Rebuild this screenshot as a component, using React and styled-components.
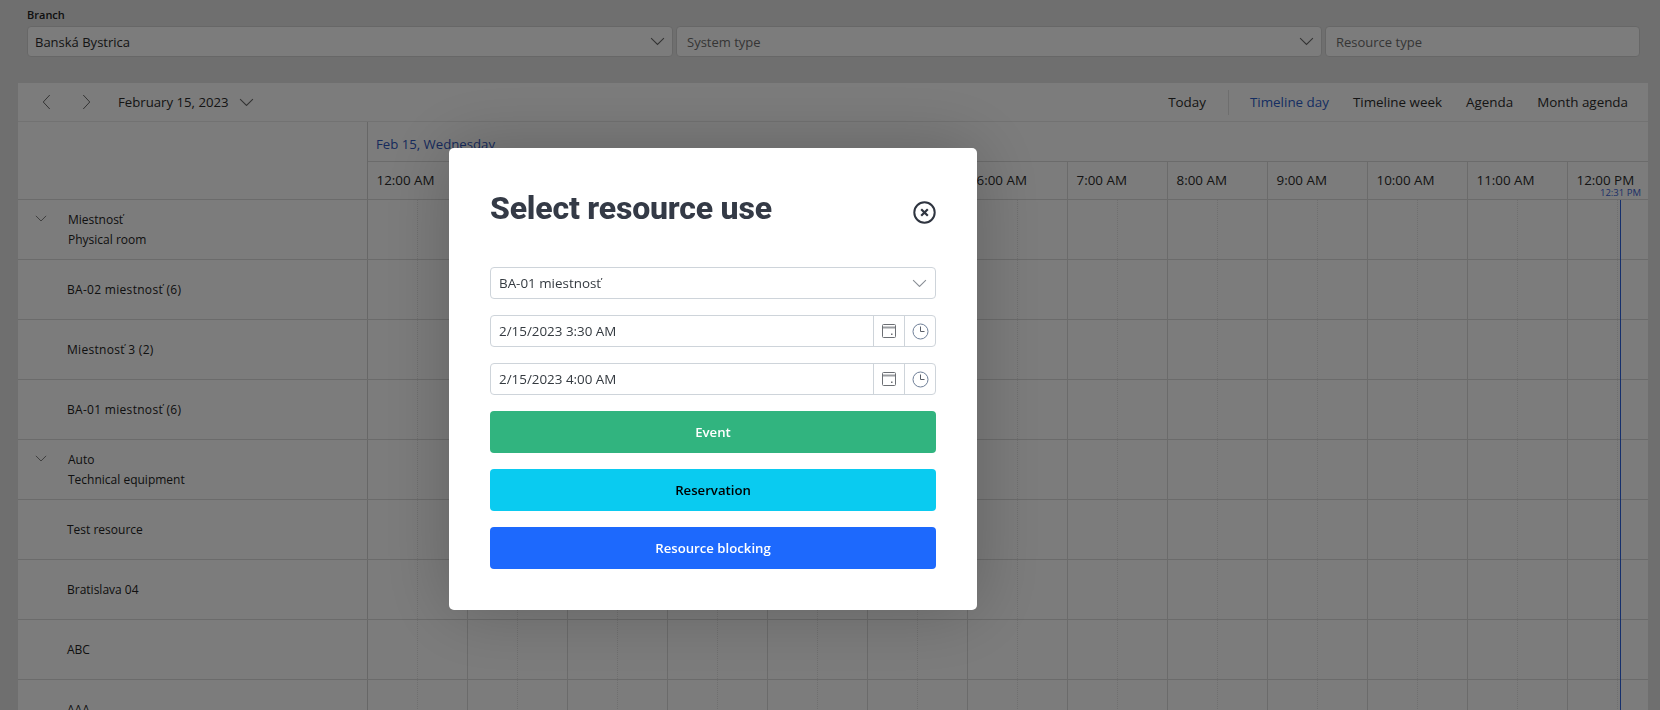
import React from "react";
import styled, { createGlobalStyle } from "styled-components";

const GlobalStyle = createGlobalStyle`
  html, body {
    margin: 0;
    height: 100%;
    overflow: hidden;
    background: #dedede;
    font-family: "Open Sans", "Liberation Sans", sans-serif;
  }
  * { box-sizing: border-box; }
`;

const Page = styled.div`
  height: 710px;
  overflow: hidden;
`;

const Filters = styled.div`
  padding: 7px 20px 0 27px;
  height: 83px;
`;

const FilterLabel = styled.div`
  font-size: 11px;
  font-weight: 600;
  line-height: 15px;
  height: 19px;
  color: #222;
`;

const FilterRow = styled.div`
  display: flex;
  gap: 3px;
`;

const FilterBox = styled.div`
  width: ${(p) => p.$width}px;
  height: 31px;
  display: flex;
  align-items: center;
  justify-content: space-between;
  padding: 0 7px 0 ${(p) => (p.$placeholder ? 10 : 7)}px;
  background: #f9f9f9;
  border: 1px solid #cfcfcf;
  border-radius: 4px;
  font-size: 13px;
  color: ${(p) => (p.$placeholder ? "#6b6b6b" : "#2a2a2a")};
`;

const Scheduler = styled.div`
  margin: 0 12px 0 18px;
  background: #f9f9f9;
`;

const Toolbar = styled.div`
  height: 39px;
  display: flex;
  align-items: center;
  padding: 0 8px 0 20px;
  border-bottom: 1px solid #e4e4e4;
  font-size: 13.4px;
  color: #2a2a2a;
`;

const NavButton = styled.span`
  width: 16px;
  margin-right: 24px;
  display: flex;
  justify-content: center;
`;

const CurrentDate = styled.span`
  margin-right: 10px;
  font-size: 13.2px;
`;

const ToolbarRight = styled.div`
  margin-left: auto;
  display: flex;
  align-items: center;
`;

const ViewLink = styled.span`
  padding: 0 12px;
  color: ${(p) => (p.$active ? "#2c5cc5" : "#2a2a2a")};
`;

const Divider = styled.span`
  width: 1px;
  height: 25px;
  margin: 0 9px 0 10px;
  background: #dcdcdc;
`;

const GridHead = styled.div`
  display: flex;
  height: 78px;
`;

const Corner = styled.div`
  width: 350px;
  flex: none;
  border-right: 1px solid #cfcfcf;
  border-bottom: 1px solid #d6d6d6;
`;

const HeadRight = styled.div`
  flex: 1;
  min-width: 0;
  overflow: hidden;
  display: flex;
  flex-direction: column;
`;

const DateCell = styled.div`
  height: 40px;
  padding: 13px 0 0 8px;
  font-size: 13.2px;
  line-height: 18px;
  color: #2f55b8;
  border-bottom: 1px solid #d6d6d6;
`;

const HourRow = styled.div`
  display: flex;
  height: 38px;
  border-bottom: 1px solid #d6d6d6;
`;

const HourCell = styled.div`
  width: 100px;
  flex: none;
  padding: 9px 0 0 8.5px;
  font-size: 13.4px;
  line-height: 18px;
  color: #2a2a2a;
  border-right: 1px solid #d6d6d6;
`;

const GridBody = styled.div`
  position: relative;
`;

const Row = styled.div`
  display: flex;
  height: 60px;
  border-bottom: 1px solid #d6d6d6;
`;

const RowName = styled.div`
  width: 350px;
  flex: none;
  display: flex;
  align-items: center;
  padding-left: ${(p) => (p.$group ? 17 : 49)}px;
  border-right: 1px solid #cfcfcf;
  font-size: 12px;
  line-height: 20px;
  letter-spacing: ${(p) => (p.$spaced ? 0.3 : 0)}px;
  color: #222;
`;

const GroupToggle = styled.span`
  width: 16px;
  margin-right: 17px;
  align-self: flex-start;
  margin-top: 15px;
  line-height: 0;
`;

const GroupText = styled.div`
  display: flex;
  flex-direction: column;
`;

const Slots = styled.div`
  flex: 1;
  min-width: 0;
  overflow: hidden;
  display: flex;
`;

const Slot = styled.div`
  width: 50px;
  flex: none;
  border-right: 1px ${(p) => (p.$half ? "dotted" : "solid")} ${(p) => (p.$half ? "#dedede" : "#d6d6d6")};
`;

const NowLine = styled.div`
  position: absolute;
  top: 0;
  bottom: 0;
  left: 1602px;
  width: 1px;
  background: #2a5fd8;
`;

const NowLabel = styled.span`
  position: absolute;
  left: 1582px;
  top: -13px;
  font-size: 9.5px;
  line-height: 12px;
  color: #3a5ed0;
`;

const Overlay = styled.div`
  position: fixed;
  inset: 0;
  background: rgba(0, 0, 0, 0.5);
`;

const Modal = styled.div`
  position: absolute;
  left: 449px;
  top: 148px;
  width: 528px;
  height: 462px;
  padding: 41px 41px 0;
  background: #fff;
  border-radius: 5px;
  box-shadow: 0 0 70px rgba(0, 0, 0, 0.22);
`;

const ModalHead = styled.div`
  display: flex;
  align-items: flex-start;
  justify-content: space-between;
  height: 78px;
`;

const Title = styled.h2`
  margin: 2px 0 0;
  font-family: Roboto, "Liberation Sans", sans-serif;
  font-size: 32px;
  font-weight: 800;
  letter-spacing: -0.2px;
  line-height: 34px;
  color: #343a46;
`;

const CloseButton = styled.span`
  margin-top: 12px;
  line-height: 0;
`;

const Stack = styled.div`
  display: flex;
  flex-direction: column;
  gap: 16px;
`;

const Field = styled.div`
  height: 32px;
  display: flex;
  align-items: center;
  border: 1px solid #ced4da;
  border-radius: 4px;
  font-size: 13.4px;
  color: #343a40;
`;

const FieldText = styled.span`
  flex: 1;
  padding-left: 8px;
`;

const Addon = styled.span`
  width: 31px;
  height: 100%;
  flex: none;
  display: flex;
  align-items: center;
  justify-content: center;
  border-left: 1px solid #ced4da;
`;

const ArrowBox = styled.span`
  width: 31px;
  display: flex;
  justify-content: center;
`;

const ActionButton = styled.button`
  height: 42px;
  border: 0;
  border-radius: 4px;
  background: ${(p) => p.$bg};
  color: ${(p) => p.$fg};
  font-family: inherit;
  font-size: 13.2px;
  font-weight: 600;
`;

const Chevron = ({ dir = "down", size = 15, color = "#666" }) => {
  const paths = {
    down: "M1 1l6 6 6-6",
    left: "M7.5 1L1 8l6.5 7",
    right: "M1 1l6.5 7L1 15",
  };
  const isDown = dir === "down";
  return (
    <svg
      width={isDown ? size : 9}
      height={isDown ? size * 0.57 : 16}
      viewBox={isDown ? "0 0 14 8" : "0 0 8.5 16"}
      fill="none"
      stroke={color}
      strokeWidth="1"
    >
      <path d={paths[dir]} />
    </svg>
  );
};

const CalendarIcon = () => (
  <svg width="16" height="16" viewBox="0 0 16 16" fill="none">
    <rect x="1.5" y="1.5" width="13" height="13" rx="1" stroke="#6c6f74" />
    <path d="M2 4.5h12" stroke="#9a9da1" strokeWidth="2" />
    <path d="M4 1v1M12 1v1" stroke="#6c6f74" />
    <rect x="10" y="10.5" width="1.5" height="1.5" fill="#6c6f74" />
  </svg>
);

const ClockIcon = () => (
  <svg width="17" height="17" viewBox="0 0 17 17" fill="none" stroke="#6f7f98">
    <circle cx="8.5" cy="8.5" r="7.5" />
    <path d="M8.5 3.5v5h4" stroke="#5a5f68" />
  </svg>
);

const CloseIcon = () => (
  <svg width="23" height="23" viewBox="0 0 23 23" fill="none" stroke="#2f3540">
    <circle cx="11.5" cy="11.5" r="10.2" strokeWidth="2" />
    <path d="M8.2 8.2l6.6 6.6M14.8 8.2l-6.6 6.6" strokeWidth="2.2" />
  </svg>
);

const hours = [
  "12:00 AM", "1:00 AM", "2:00 AM", "3:00 AM", "4:00 AM", "5:00 AM", "6:00 AM",
  "7:00 AM", "8:00 AM", "9:00 AM", "10:00 AM", "11:00 AM", "12:00 PM",
];

const resources = [
  { name: "Miestnosť", sub: "Physical room" },
  { name: "BA-02 miestnosť (6)" },
  { name: "Miestnosť 3 (2)" },
  { name: "BA-01 miestnosť (6)" },
  { name: "Auto", sub: "Technical equipment" },
  { name: "Test resource" },
  { name: "Bratislava 04" },
  { name: "ABC" },
  { name: "AAA" },
];

const views = ["Timeline day", "Timeline week", "Agenda", "Month agenda"];

const DateField = ({ value }) => (
  <Field>
    <FieldText>{value}</FieldText>
    <Addon><CalendarIcon /></Addon>
    <Addon><ClockIcon /></Addon>
  </Field>
);

const App = () => {
  return (
    <Page>
      <GlobalStyle />
      <Filters>
        <FilterLabel>Branch</FilterLabel>
        <FilterRow>
          <FilterBox $width={646}>
            Banská Bystrica
            <Chevron />
          </FilterBox>
          <FilterBox $width={646} $placeholder>
            System type
            <Chevron />
          </FilterBox>
          <FilterBox $width={315} $placeholder>Resource type</FilterBox>
        </FilterRow>
      </Filters>

      <Scheduler>
        <Toolbar>
          <NavButton><Chevron dir="left" /></NavButton>
          <NavButton><Chevron dir="right" /></NavButton>
          <CurrentDate>February 15, 2023</CurrentDate>
          <Chevron size={15} />
          <ToolbarRight>
            <ViewLink>Today</ViewLink>
            <Divider />
            {views.map((v, i) => (
              <ViewLink key={v} $active={i === 0}>{v}</ViewLink>
            ))}
          </ToolbarRight>
        </Toolbar>

        <GridHead>
          <Corner />
          <HeadRight>
            <DateCell>Feb 15, Wednesday</DateCell>
            <HourRow>
              {hours.map((h) => (
                <HourCell key={h}>{h}</HourCell>
              ))}
            </HourRow>
          </HeadRight>
        </GridHead>

        <GridBody>
          {resources.map((r) => (
            <Row key={r.name}>
              <RowName $group={!!r.sub} $spaced={!r.sub && r.name.includes("ť")}>
                {r.sub ? (
                  <>
                    <GroupToggle><Chevron size={12} /></GroupToggle>
                    <GroupText>
                      <span>{r.name}</span>
                      <span>{r.sub}</span>
                    </GroupText>
                  </>
                ) : (
                  r.name
                )}
              </RowName>
              <Slots>
                {hours.map((h) => (
                  <React.Fragment key={h}>
                    <Slot $half />
                    <Slot />
                  </React.Fragment>
                ))}
              </Slots>
            </Row>
          ))}
          <NowLine />
          <NowLabel>12:31 PM</NowLabel>
        </GridBody>
      </Scheduler>

      <Overlay>
        <Modal>
          <ModalHead>
            <Title>Select resource use</Title>
            <CloseButton><CloseIcon /></CloseButton>
          </ModalHead>
          <Stack>
            <Field>
              <FieldText>BA-01 miestnosť</FieldText>
              <ArrowBox><Chevron color="#8a8f96" /></ArrowBox>
            </Field>
            <DateField value="2/15/2023 3:30 AM" />
            <DateField value="2/15/2023 4:00 AM" />
            <ActionButton $bg="#31b47f" $fg="#fff">Event</ActionButton>
            <ActionButton $bg="#0acbf0" $fg="#000">Reservation</ActionButton>
            <ActionButton $bg="#1d69fd" $fg="#fff">Resource blocking</ActionButton>
          </Stack>
        </Modal>
      </Overlay>
    </Page>
  );
};

export default App;
